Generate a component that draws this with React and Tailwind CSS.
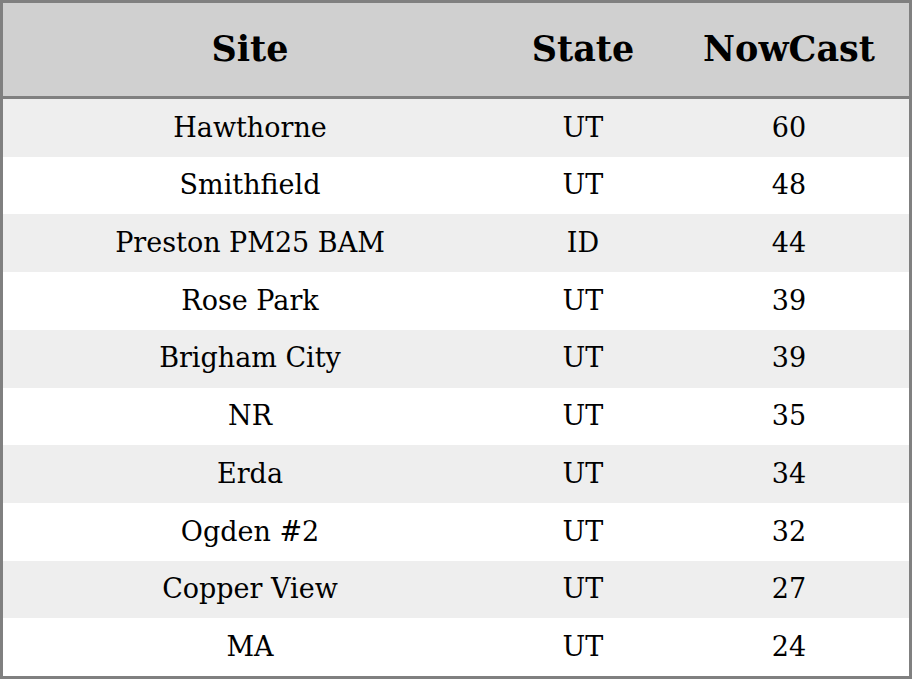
import React from 'react';

const rows = [
  { site: 'Hawthorne', state: 'UT', nowcast: 60 },
  { site: 'Smithfield', state: 'UT', nowcast: 48 },
  { site: 'Preston PM25 BAM', state: 'ID', nowcast: 44 },
  { site: 'Rose Park', state: 'UT', nowcast: 39 },
  { site: 'Brigham City', state: 'UT', nowcast: 39 },
  { site: 'NR', state: 'UT', nowcast: 35 },
  { site: 'Erda', state: 'UT', nowcast: 34 },
  { site: 'Ogden #2', state: 'UT', nowcast: 32 },
  { site: 'Copper View', state: 'UT', nowcast: 27 },
  { site: 'MA', state: 'UT', nowcast: 24 },
];

export default function App() {
  return (
    <div className="h-[679px] w-[912px] flex flex-col border-[3px] border-[#808080] bg-white text-black font-['DejaVu_Serif',serif]">
      <div className="h-[96px] shrink-0 grid grid-cols-[494px_172px_1fr] items-center bg-[#d0d0d0] border-b-[3px] border-[#808080] text-[35px] font-bold text-center">
        <div>Site</div>
        <div>State</div>
        <div>NowCast</div>
      </div>
      <div className="flex-1 flex flex-col">
        {rows.map((r, i) => (
          <div
            key={r.site}
            className={`flex-1 grid grid-cols-[494px_172px_1fr] items-center text-center text-[27px] ${i % 2 === 0 ? 'bg-[#eeeeee]' : 'bg-white'}`}
          >
            <div>{r.site}</div>
            <div>{r.state}</div>
            <div>{r.nowcast}</div>
          </div>
        ))}
      </div>
    </div>
  );
}
